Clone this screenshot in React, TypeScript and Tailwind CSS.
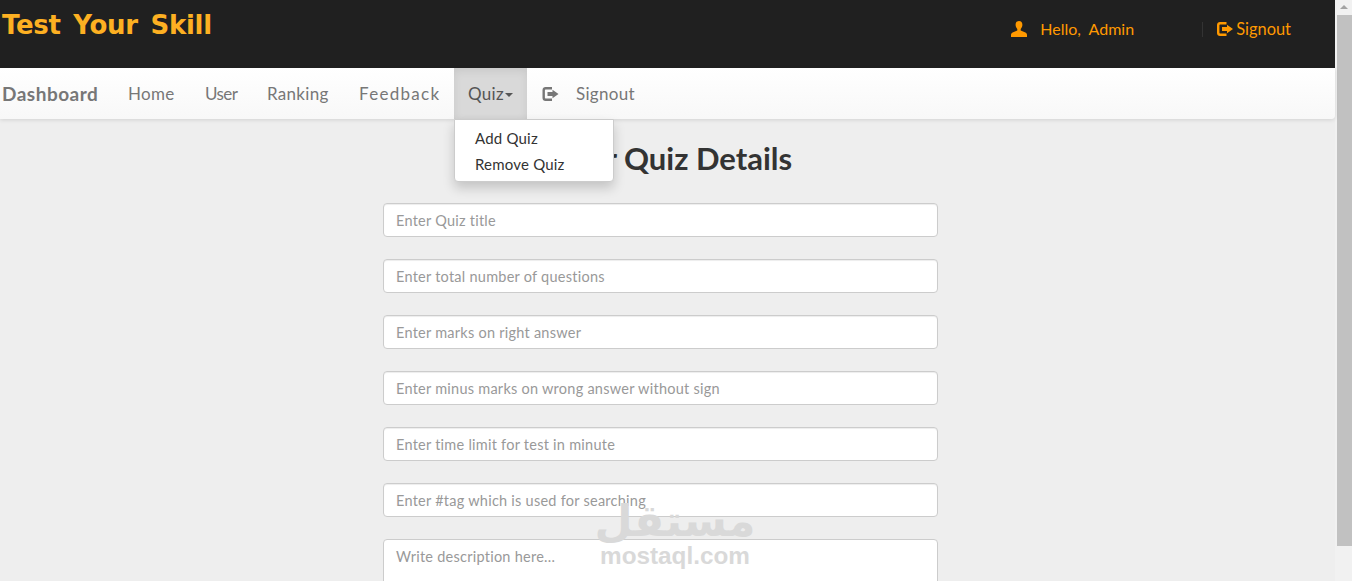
const FIELDS = [
  'Enter Quiz title',
  'Enter total number of questions',
  'Enter marks on right answer',
  'Enter minus marks on wrong answer without sign',
  'Enter time limit for test in minute',
  'Enter #tag which is used for searching',
];

function UserIcon({ className }: { className: string }) {
  return (
    <svg viewBox="0 0 16 16" className={className} fill="currentColor">
      <path d="M8 0C5.8 0 4.6 1.6 4.6 3.8c0 1.600.7 3.200 1.700 4.200v1.400L1.600 11.600C.6 12.100 0 13 0 14v2h16v-2c0-1-.6-1.900-1.600-2.400L9.700 9.400V8c1-1 1.700-2.600 1.700-4.200C11.400 1.600 10.200 0 8 0z" />
    </svg>
  );
}

function LogoutIcon({ className }: { className: string }) {
  return (
    <svg viewBox="0 0 16 14" className={className} fill="currentColor">
      <path d="M3 0h6.500v2.400H3.400c-.6 0-1 .4-1 1v7.200c0 .6.4 1 1 1h6.100V14H3c-1.700 0-3-1.300-3-3V3c0-1.700 1.300-3 3-3z" />
      <path d="M10 2.800 16 7l-6 4.200V8.900H5V5.100h5z" />
    </svg>
  );
}

export default function App() {
  return (
    <div className="relative flex h-[581px] overflow-hidden bg-[#eeeeee] font-['Lato','Noto_Sans',sans-serif]">
      <div className="min-w-0 flex-1">
        <header className="flex h-[68px] bg-[#202020]">
          <h1 className="ml-[2px] mt-[5px] font-['DejaVu_Sans',sans-serif] text-[26px] font-bold leading-[40px] tracking-[-0.3px] [word-spacing:4px] text-[#fdb022]">
            Test Your Skill
          </h1>
          <div className="ml-auto mr-[44px] flex h-[58px] items-center text-[#ff9900]">
            <UserIcon className="h-4 w-4" />
            <span className="ml-[13px] w-[162px] text-[16px]">Hello,&nbsp; Admin</span>
            <span className="h-[15px] w-px bg-[#333333]" />
            <LogoutIcon className="ml-[14px] h-[14px] w-4" />
            <span className="ml-[3px] text-[16.400px]">Signout</span>
          </div>
        </header>

        <nav className="relative z-10 flex h-[51px] items-stretch rounded-br-[4px] bg-gradient-to-b from-white to-[#f8f8f8] text-[17px] tracking-[0.3px] text-[#777777] shadow-[0_1px_4px_rgba(0,0,0,0.12)]">
          <a className="ml-[2px] flex w-[126px] items-center pt-[2px] text-[19px] font-bold tracking-[0.5px]">Dashboard</a>
          <a className="flex w-[77px] items-center">Home</a>
          <a className="flex w-[62px] items-center tracking-[-0.6px]">User</a>
          <a className="flex w-[92px] items-center">Ranking</a>
          <a className="flex w-[95px] items-center tracking-[1.300px]">Feedback</a>
          <div className="relative flex w-[73px] items-center justify-center bg-[#d9d9d9] text-[#555555] shadow-[inset_0_3px_9px_rgba(0,0,0,0.08)]">
            Quiz
            <span className="ml-px mt-[2px] h-0 w-0 border-x-4 border-t-4 border-x-transparent border-t-[#555555]" />
            <div className="absolute left-0 top-[51px] flex h-[63px] w-[160px] flex-col justify-center gap-[6px] rounded-b-[4px] border border-[#cccccc] bg-white pl-[20px] text-[15px] leading-[20px] tracking-[0.2px] text-[#333333] shadow-[0_6px_12px_rgba(0,0,0,0.18)]">
              <span>Add Quiz</span>
              <span>Remove Quiz</span>
            </div>
          </div>
          <div className="ml-[15px] flex items-center">
            <LogoutIcon className="h-[14px] w-[17px] text-[#777777]" />
            <span className="ml-[17px]">Signout</span>
          </div>
        </nav>

        <main className="ml-[383px] w-[555px]">
          <h2 className="mt-[18px] h-[66px] pl-[14px] text-center text-[31px] font-bold leading-[42px] text-[#333333]">
            Enter Quiz Details
          </h2>
          <form className="flex flex-col gap-[22px]">
            {FIELDS.map((placeholder) => (
              <input
                key={placeholder}
                type="text"
                placeholder={placeholder}
                className="h-[34px] w-full rounded-[4px] border border-[#cccccc] bg-white px-3 text-[14.500px] tracking-[0.25px] shadow-[inset_0_1px_1px_rgba(0,0,0,0.075)] placeholder:text-[#999999]"
              />
            ))}
            <textarea
              placeholder="Write description here..."
              rows={4}
              className="h-[100px] w-full resize-none rounded-[4px] border border-[#cccccc] bg-white px-3 py-[6px] text-[14.500px] tracking-[0.25px] placeholder:text-[#999999]"
            />
          </form>
        </main>
      </div>

      <div className="flex w-[17px] shrink-0 flex-col items-center bg-[#f1f1f1]">
        <span className="mt-[5px] h-0 w-0 border-x-4 border-b-4 border-x-transparent border-b-[#a3a3a3]" />
        <div className="ml-px mt-[6px] h-[531px] w-[15px] bg-[#c1c1c1]" />
      </div>

      <div className="pointer-events-none absolute left-[598px] top-[498px] flex w-[154px] flex-col items-center text-[#d9d9d9]">
        <span className="font-['DejaVu_Sans',sans-serif] text-[44px] font-bold leading-[46px]">مستقل</span>
        <span className="font-['Liberation_Sans',sans-serif] text-[24.300px] font-bold leading-[24px]">mostaql.com</span>
      </div>
    </div>
  );
}
